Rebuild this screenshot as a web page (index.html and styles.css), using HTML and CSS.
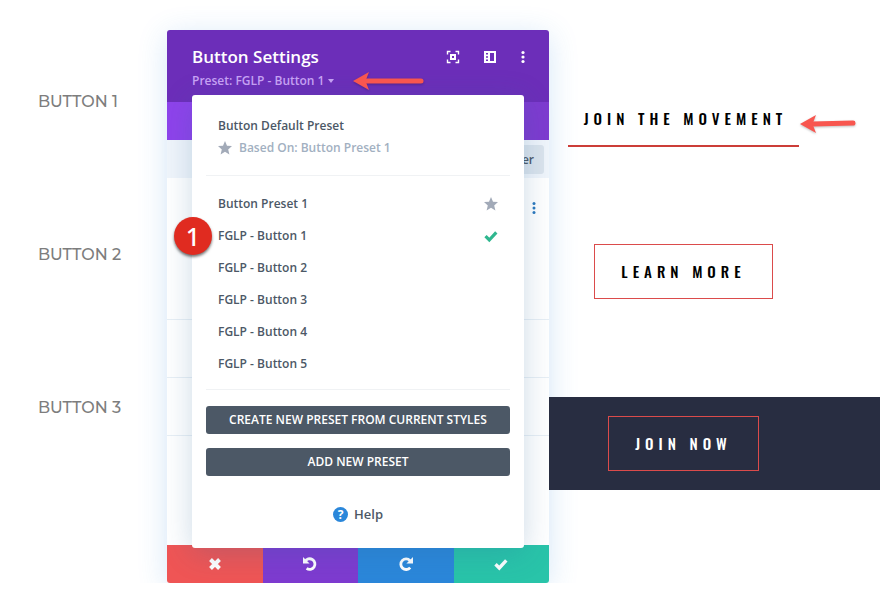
FILE: index.html
```html
<!DOCTYPE html>
<html lang="en">
<head>
<meta charset="utf-8">
<title>Button Settings</title>
<link rel="stylesheet" href="styles.css">
</head>
<body>
<main class="page">
  <section class="labels">
    <p>BUTTON 1</p>
    <p>BUTTON 2</p>
    <p>BUTTON 3</p>
  </section>

  <section class="modal">
    <header class="modal-header">
      <div class="heading">
        <h1>Button Settings</h1>
        <button class="preset-toggle" type="button">Preset: FGLP - Button 1<span class="caret"></span></button>
      </div>
      <div class="tools">
        <button type="button" aria-label="Focus"><svg width="14" height="14" viewBox="0 0 14 14"><path d="M1.500 4.500v-3h3M9.500 1.500h3v3M12.500 9.500v3h-3M4.500 12.500h-3v-3" fill="none" stroke="currentColor" stroke-width="1.400"/><rect x="5" y="5" width="4" height="4" fill="none" stroke="currentColor" stroke-width="2"/></svg></button>
        <button type="button" aria-label="Dock"><svg width="14" height="14" viewBox="0 0 14 14"><path fill="currentColor" fill-rule="evenodd" d="M1 1h12v12H1zM7 3h4v8H7zM3 3h2v1.600H3zM3 6.200h2v1.600H3zM3 9.400h2V11H3z"/></svg></button>
        <button type="button" aria-label="More"><svg width="6" height="14" viewBox="4 0 6 14" fill="currentColor"><circle cx="7" cy="2.500" r="1.600"/><circle cx="7" cy="7" r="1.600"/><circle cx="7" cy="11.500" r="1.600"/></svg></button>
      </div>
    </header>
    <div class="tabs"></div>
    <div class="filter-bar"><button type="button" class="filter">Filter</button></div>
    <div class="modal-body">
      <div class="group first"><button type="button" class="group-more" aria-label="Group options"><svg width="14" height="14" viewBox="0 0 14 14" fill="currentColor"><circle cx="7" cy="2.500" r="1.500"/><circle cx="7" cy="7" r="1.500"/><circle cx="7" cy="11.500" r="1.500"/></svg></button></div>
      <div class="group"></div>
      <div class="group"></div>
    </div>
    <footer class="actions">
      <button type="button" class="discard" aria-label="Discard"><svg width="14" height="14" viewBox="0 0 14 14"><path d="M2.500 2.500l9 9M11.500 2.500l-9 9" stroke="currentColor" stroke-width="4" fill="none"/></svg></button>
      <button type="button" class="undo" aria-label="Undo"><svg width="16" height="16" viewBox="0 0 16 16"><path d="M3 5.500A5.300 5.300 0 1 1 4.600 12.400" fill="none" stroke="currentColor" stroke-width="2.800"/><path d="M1 1v6.600h6.600z" fill="currentColor"/></svg></button>
      <button type="button" class="redo" aria-label="Redo"><svg width="16" height="16" viewBox="0 0 16 16"><path d="M12 4.600a5.300 5.300 0 1 0 .2 7" fill="none" stroke="currentColor" stroke-width="2.800"/><path d="M15 1v6.600H8.400z" fill="currentColor"/></svg></button>
      <button type="button" class="save" aria-label="Save"><svg width="14" height="14" viewBox="0 0 14 14"><path d="M1.500 7.200l3.800 3.800 7-7.600" fill="none" stroke="currentColor" stroke-width="3.400"/></svg></button>
    </footer>

    <div class="dropdown">
      <div class="default-preset">
        <strong>Button Default Preset</strong>
        <span class="based-on"><svg width="14" height="14" viewBox="0 0 14 14"><path fill="currentColor" d="M7 0l2 4.700 5 .4-3.800 3.300 1.200 5L7 10.700l-4.400 2.700 1.200-5L0 5.100l5-.4z"/></svg>Based On: Button Preset 1</span>
      </div>
      <ul class="presets">
        <li><a href="#">Button Preset 1<svg class="star" width="14" height="14" viewBox="0 0 14 14"><path fill="currentColor" d="M7 0l2 4.700 5 .4-3.800 3.300 1.200 5L7 10.700l-4.400 2.700 1.200-5L0 5.100l5-.4z"/></svg></a></li>
        <li><a href="#">FGLP - Button 1<svg class="check" width="14" height="14" viewBox="0 0 14 14"><path d="M1.500 7.200l3.800 3.800 7-7.600" fill="none" stroke="currentColor" stroke-width="3.200"/></svg></a></li>
        <li><a href="#">FGLP - Button 2</a></li>
        <li><a href="#">FGLP - Button 3</a></li>
        <li><a href="#">FGLP - Button 4</a></li>
        <li><a href="#">FGLP - Button 5</a></li>
      </ul>
      <div class="preset-actions">
        <button type="button">CREATE NEW PRESET FROM CURRENT STYLES</button>
        <button type="button">ADD NEW PRESET</button>
      </div>
      <a class="help" href="#"><span class="help-icon">?</span>Help</a>
    </div>
    <span class="step">1</span>
    <svg class="arrow arrow-preset" width="72" height="20" viewBox="0 0 72 20"><path d="M12 10h56" stroke="currentColor" stroke-width="5" stroke-linecap="round"/><path d="M0 10L16 1l-3.500 9L16 19z" fill="currentColor"/></svg>
  </section>

  <section class="showcase">
    <div class="row"><a class="cta underlined" href="#">JOIN THE MOVEMENT</a></div>
    <div class="row"><a class="cta outlined" href="#">LEARN MORE</a></div>
    <div class="row dark"><a class="cta outlined" href="#">JOIN NOW</a></div>
    <svg class="arrow arrow-cta" width="56" height="20" viewBox="0 0 56 20"><path d="M12 10l41-1" stroke="currentColor" stroke-width="5" stroke-linecap="round"/><path d="M0 10L16 1l-3.500 9L16 19z" fill="currentColor"/></svg>
  </section>
</main>
</body>
</html>
```
FILE: styles.css
```css
* {
  box-sizing: border-box;
}

body {
  margin: 0;
  background: #fff;
  color: #4c5866;
  font-family: "Open Sans", sans-serif;
  font-size: 12px;
  overflow: hidden;
}

button {
  border: 0;
  padding: 0;
  background: none;
  color: inherit;
  font: inherit;
  cursor: pointer;
}

a {
  color: inherit;
  text-decoration: none;
}

svg {
  display: block;
}

.page {
  display: grid;
  grid-template-columns: 167fr 382fr 331fr;
  align-items: start;
}

.labels {
  display: flex;
  flex-direction: column;
  gap: 133px;
  padding: 92px 0 0 38px;
  color: #7d7d7d;
  font-family: Montserrat, Inter, sans-serif;
  font-size: 16px;
  font-weight: 500;
  line-height: 20px;
}

.labels p {
  margin: 0;
}

.modal {
  position: relative;
  margin-top: 30px;
  border-radius: 3px;
  background: #fff;
  box-shadow: 0 5px 30px rgba(43, 135, 218, 0.2);
}

.modal-header {
  display: flex;
  justify-content: space-between;
  height: 72px;
  padding: 15px 23px 0 25px;
  border-radius: 3px 3px 0 0;
  background: #6c2eb9;
  color: #fff;
}

.heading h1 {
  margin: 0;
  font-size: 17px;
  font-weight: 600;
  line-height: 24px;
}

.preset-toggle {
  display: flex;
  align-items: center;
  gap: 4px;
  color: #c9a3f5;
  font-size: 12px;
  font-weight: 600;
  line-height: 24px;
}

.caret {
  border: 3px solid transparent;
  border-top: 4px solid currentColor;
  border-bottom: 0;
}

.tools {
  display: flex;
  align-items: center;
  gap: 23px;
  height: 24px;
}

.tabs {
  height: 38px;
  background: linear-gradient(90deg, #8e43eb 0 50%, #7e3bd0 50%);
}

.filter-bar {
  display: flex;
  justify-content: flex-end;
  height: 38px;
  padding: 5px 5px 4px;
  background: #f0f5fb;
}

.filter {
  padding: 0 10px;
  border-radius: 3px;
  background: #dbe4ed;
  font-weight: 600;
}

.modal-body {
  height: 367px;
}

.group {
  height: 58px;
  border-bottom: 1px solid #e8eff5;
}

.group.first {
  display: flex;
  justify-content: flex-end;
  height: 142px;
  padding: 23px 8px 0 0;
}

.group-more {
  height: 14px;
  color: #2b78bd;
}

.actions {
  display: grid;
  grid-template-columns: repeat(4, 1fr);
  height: 38px;
  color: #fff;
}

.actions button {
  display: flex;
  align-items: center;
  justify-content: center;
}

.discard {
  border-radius: 0 0 0 3px;
  background: #ef5555;
}

.undo {
  background: #7e3bd0;
}

.redo {
  background: #2b87da;
}

.save {
  border-radius: 0 0 3px;
  background: #29c4a9;
}

.dropdown {
  position: absolute;
  top: 65px;
  right: 25px;
  left: 25px;
  padding: 20px 14px 24px;
  border-radius: 3px;
  background: #fff;
  box-shadow: 0 5px 30px rgba(43, 100, 150, 0.24);
  font-weight: 600;
}

.default-preset {
  display: flex;
  flex-direction: column;
  padding: 0 12px 16px;
  border-bottom: 1px solid #f0f2f4;
  line-height: 22px;
}

.default-preset strong {
  font-weight: 600;
}

.based-on {
  display: flex;
  align-items: center;
  gap: 7px;
  color: #a2b0c1;
}

.presets {
  margin: 0;
  padding: 12px 12px 9px;
  border-bottom: 1px solid #f0f2f4;
  list-style: none;
  line-height: 32px;
}

.presets a {
  display: flex;
  align-items: center;
  justify-content: space-between;
}

.based-on svg,
.star {
  color: #a2aab8;
}

.check {
  color: #2fb78f;
}

.preset-actions {
  display: flex;
  flex-direction: column;
  gap: 14px;
  margin-top: 16px;
}

.preset-actions button {
  height: 28px;
  padding-bottom: 2px;
  border-radius: 3px;
  background: #4c5866;
  color: #fff;
  font-size: 12px;
  font-weight: 600;
}

.help {
  display: flex;
  align-items: center;
  justify-content: center;
  gap: 6px;
  margin-top: 28px;
  font-size: 13px;
  line-height: 20px;
}

.help-icon {
  width: 15px;
  height: 15px;
  border-radius: 50%;
  background: #2b87da;
  color: #fff;
  font-size: 12px;
  font-weight: 700;
  line-height: 15px;
  text-align: center;
}

.step {
  position: absolute;
  top: 187px;
  left: 7px;
  width: 38px;
  height: 38px;
  border-radius: 50%;
  background: #e02b20;
  box-shadow: 0 2px 3px rgba(0, 0, 0, 0.55);
  color: #fff;
  font-family: "Noto Sans", sans-serif;
  font-size: 25px;
  font-weight: 500;
  line-height: 38px;
  text-align: center;
}

.arrow {
  position: absolute;
  color: #f8564f;
  filter: drop-shadow(0 1px 1px rgba(0, 0, 0, 0.25));
}

.arrow-preset {
  top: 41px;
  left: 186px;
}

.arrow-cta {
  top: 114px;
  left: 251px;
}

.showcase {
  position: relative;
  display: flex;
  flex-direction: column;
  gap: 97px;
  padding-top: 92px;
}

.row {
  display: flex;
  justify-content: center;
  padding-right: 62px;
}

.dark {
  margin-top: 1px;
  padding-top: 19px;
  padding-bottom: 19px;
  background: #282d41;
}

.cta {
  padding: 13px 26px;
  color: #000;
  font-family: Oswald, "Liberation Sans Narrow", "Open Sans", sans-serif;
  font-size: 15px;
  font-weight: 500;
  letter-spacing: 5px;
  line-height: 27px;
  white-space: nowrap;
}

.underlined {
  padding-right: 12px;
  padding-left: 16px;
  border-bottom: 2px solid #cc3d38;
}

.outlined {
  border: 1px solid #db4b4b;
}

.dark .cta {
  color: #fff;
}
```
